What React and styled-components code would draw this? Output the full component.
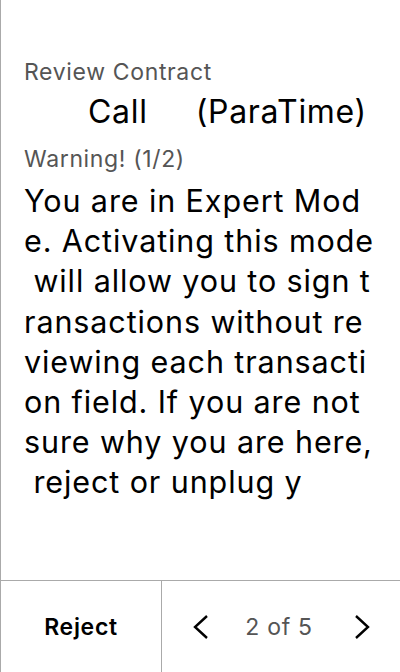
import React from "react";
import styled, { createGlobalStyle } from "styled-components";

const Global = createGlobalStyle`
  html, body { margin: 0; padding: 0; background: #fff; }
  body { font-family: Inter, "Noto Sans", sans-serif; }
`;

const Screen = styled.div`
  width: 400px;
  height: 672px;
  box-sizing: border-box;
  border-left: 1px solid #aaa;
  display: flex;
  flex-direction: column;
  background: #fff;
`;

const Body = styled.div`
  flex: 1;
  padding: 57px 0 0 23px;
  display: flex;
  flex-direction: column;
`;

const Label = styled.div`
  font-size: 23px;
  line-height: 30px;
  letter-spacing: 0.65px;
  color: #555;
`;

const Title = styled.div`
  display: flex;
  gap: 48px;
  padding-left: 64px;
  font-size: 32px;
  line-height: 49px;
  letter-spacing: 0.7px;
  color: #000;
  margin-bottom: 8px;
`;

const Text = styled.div`
  font-size: 30.5px;
  line-height: 40.2px;
  letter-spacing: 0.9px;
  color: #000;
  margin-top: 7px;
`;

const Line = styled.div`
  white-space: pre;
`;

const Footer = styled.div`
  height: 92px;
  border-top: 1px solid #aaa;
  display: flex;
  box-sizing: border-box;
`;

const RejectCell = styled.div`
  width: 160px;
  border-right: 1px solid #aaa;
  display: flex;
  align-items: center;
  justify-content: center;
  font-size: 23px;
  font-weight: 600;
  letter-spacing: 0.7px;
  color: #000;
`;

const Pager = styled.div`
  flex: 1;
  display: flex;
  align-items: center;
  justify-content: space-between;
  padding: 0 30px 0 31px;
`;

const PageText = styled.div`
  font-size: 23px;
  letter-spacing: 0.7px;
  color: #555;
  margin-right: 5px;
`;

const Chevron = ({ dir }) => (
  <svg width="16" height="24" viewBox="0 0 16 24" fill="none">
    <path
      d={dir === "left" ? "M14 1 L2 12 L14 23" : "M2 1 L14 12 L2 23"}
      stroke="#000"
      strokeWidth="2.4"
      strokeLinecap="butt"
      strokeLinejoin="miter"
    />
  </svg>
);

const lines = [
  "You are in Expert Mod",
  "e. Activating this mode",
  " will allow you to sign t",
  "ransactions without re",
  "viewing each transacti",
  "on field. If you are not",
  "sure why you are here,",
  " reject or unplug y",
];

export default function App() {
  return (
    <>
      <Global />
      <Screen>
        <Body>
          <Label>Review Contract</Label>
          <Title>
            <span>Call</span>
            <span>(ParaTime)</span>
          </Title>
          <Label>Warning! (1/2)</Label>
          <Text>
            {lines.map((l, i) => (
              <Line key={i}>{l}</Line>
            ))}
          </Text>
        </Body>
        <Footer>
          <RejectCell>Reject</RejectCell>
          <Pager>
            <Chevron dir="left" />
            <PageText>2 of 5</PageText>
            <Chevron dir="right" />
          </Pager>
        </Footer>
      </Screen>
    </>
  );
}
